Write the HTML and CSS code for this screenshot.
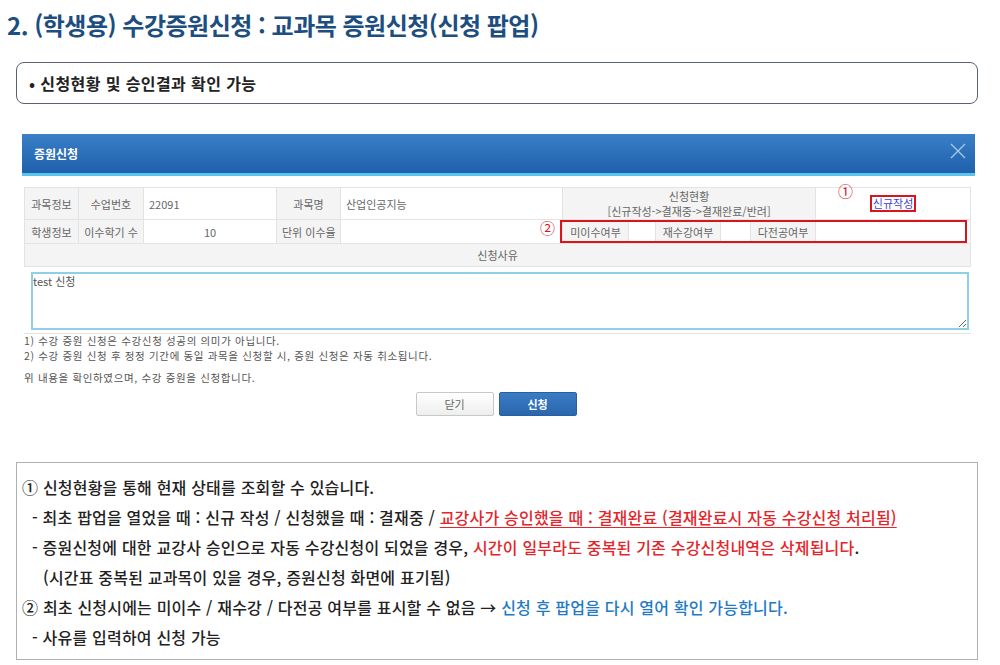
FILE: index.html
```html
<!DOCTYPE html>
<html lang="ko">
<head>
    <meta charset="UTF-8">
    <meta name="viewport" content="width=device-width, initial-scale=1.0">
    <title>수강증원신청</title>
    <link rel="stylesheet" href="styles.css">
</head>
<body>

    <h1 class="page-title">2. (학생용) 수강증원신청 : 교과목 증원신청(신청 팝업)</h1>

    <div class="summary">• 신청현황 및 승인결과 확인 가능</div>

    <div class="popup">
        <div class="popup-head">
            <span>증원신청</span>
            <svg class="close" width="16" height="16" viewBox="0 0 16 16">
                <path d="M1 1 L15 15 M15 1 L1 15" stroke="#a9c8ec" stroke-width="1.3" fill="none"/>
            </svg>
        </div>

        <div class="popup-body">
            <div class="table-wrap">
                <table class="info">
                    <colgroup>
                        <col style="width:54px">
                        <col style="width:65px">
                        <col style="width:133px">
                        <col style="width:64px">
                        <col style="width:222px">
                        <col style="width:66px">
                        <col style="width:27px">
                        <col style="width:65px">
                        <col style="width:30px">
                        <col style="width:65px">
                        <col style="width:155px">
                    </colgroup>
                    <tr class="row-1">
                        <th>과목정보</th>
                        <th>수업번호</th>
                        <td>22091</td>
                        <th>과목명</th>
                        <td>산업인공지능</td>
                        <th colspan="5" class="status">신청현황<br>[신규작성-&gt;결재중-&gt;결재완료/반려]</th>
                        <td class="center"><span class="new-mark">신규작성</span></td>
                    </tr>
                    <tr class="row-2">
                        <th>학생정보</th>
                        <th>이수학기 수</th>
                        <td class="center">10</td>
                        <th>단위 이수율</th>
                        <td></td>
                        <th>미이수여부</th>
                        <td></td>
                        <th>재수강여부</th>
                        <td></td>
                        <th>다전공여부</th>
                        <td></td>
                    </tr>
                    <tr class="row-3">
                        <th colspan="11">신청사유</th>
                    </tr>
                    <tr class="row-4">
                        <td colspan="11"><textarea class="reason">test 신청</textarea></td>
                    </tr>
                </table>

                <span class="num num-1">①</span>
                <span class="num num-2">②</span>
                <div class="mark-box"></div>
            </div>

            <div class="guide">
                <p>1) 수강 증원 신청은 수강신청 성공의 의미가 아닙니다.</p>
                <p>2) 수강 증원 신청 후 정정 기간에 동일 과목을 신청할 시, 증원 신청은 자동 취소됩니다.</p>
            </div>
            <div class="agree">위 내용을 확인하였으며, 수강 증원을 신청합니다.</div>

            <div class="buttons">
                <button class="btn-close">닫기</button>
                <button class="btn-apply">신청</button>
            </div>
        </div>
    </div>

    <div class="notes">
        <p>① 신청현황을 통해 현재 상태를 조회할 수 있습니다.</p>
        <p class="sub">- 최초 팝업을 열었을 때 : 신규 작성 / 신청했을 때 : 결재중 / <span class="red under">교강사가 승인했을 때 : 결재완료 (결재완료시 자동 수강신청 처리됨)</span></p>
        <p class="sub">- 증원신청에 대한 교강사 승인으로 자동 수강신청이 되었을 경우, <span class="red">시간이 일부라도 중복된 기존 수강신청내역은 삭제됩니다</span>.</p>
        <p class="sub2">(시간표 중복된 교과목이 있을 경우, 증원신청 화면에 표기됨)</p>
        <p>② 최초 신청시에는 미이수 / 재수강 / 다전공 여부를 표시할 수 없음 → <span class="blue">신청 후 팝업을 다시 열어 확인 가능합니다.</span></p>
        <p class="sub">- 사유를 입력하여 신청 가능</p>
    </div>

</body>
</html>
```

FILE: styles.css
```css
body {
    margin: 0;
    font-family: "Noto Sans CJK KR", "Noto Sans", sans-serif;
    background-color: white;
    color: #222;
}
.page-title {
    margin: 0;
    padding: 9px 0 0 7px;
    font-size: 24px;
    line-height: 32px;
    letter-spacing: -0.5px;
    font-weight: bold;
    color: #1d4e80;
}
.summary {
    margin: 21px 22px 0 16px;
    height: 40px;
    line-height: 40px;
    padding-left: 12px;
    border: 1px solid #5a6270;
    border-radius: 8px;
    font-size: 16px;
    letter-spacing: 0.4px;
    font-weight: bold;
    color: #222;
}
.popup {
    margin: 30px 25px 0 22px;
}
.popup-head {
    height: 39px;
    border-bottom: 3px solid #5cc3ec;
    background: linear-gradient(#3a7fc8, #1f60ab);
    display: flex;
    align-items: center;
    justify-content: space-between;
    padding: 0 9px 0 12px;
    color: white;
    font-size: 12px;
    font-weight: bold;
}
.close {
    margin-top: -6px;
}
.popup-body {
    padding: 11px 5px 0 2px;
}
.table-wrap {
    position: relative;
}
.info {
    width: 946px;
    table-layout: fixed;
    border-collapse: collapse;
    font-size: 11px;
    line-height: 14px;
    color: #666;
}
.info th, .info td {
    border: 1px solid #e3e3e3;
    padding: 0 5px;
    font-weight: normal;
    white-space: nowrap;
    overflow: visible;
}
.info th {
    background-color: #f4f4f4;
    text-align: center;
}
.info td {
    text-align: left;
}
.info td.center {
    text-align: center;
}
.row-1 th, .row-1 td {
    height: 31px;
}
.row-1 .status {
    line-height: 15px;
}
.row-2 th, .row-2 td {
    height: 23px;
}
.row-3 th {
    height: 22px;
}
.row-4 td {
    height: 58px;
    vertical-align: top;
    background-color: white;
    padding: 5px 5px 3px 5px;
    border-left-color: white;
    border-right-color: white;
}
.reason {
    display: block;
    box-sizing: border-box;
    width: 938px;
    height: 58px;
    margin: 0 0 0 1px;
    border: 2px solid #8fd0e6;
    padding: 0 0;
    font-family: "Noto Sans CJK KR", sans-serif;
    font-size: 11px;
    line-height: 14px;
    color: #555;
    resize: both;
}
.new-mark {
    display: inline-block;
    border: 2px solid #d9141b;
    padding: 0 1px;
    line-height: 13px;
    color: #3f3fd8;
}
.num {
    position: absolute;
    color: #d9141b;
    font-size: 15px;
    line-height: 15px;
}
.num-1 {
    left: 814px;
    top: -4px;
}
.num-2 {
    left: 516px;
    top: 33px;
}
.mark-box {
    position: absolute;
    left: 536px;
    top: 33px;
    width: 403px;
    height: 19px;
    border: 2px solid #d9141b;
}
.guide {
    margin-top: -1px;
    font-size: 10.5px;
    color: #555;
    letter-spacing: 0.65px;
}
.guide p {
    margin: 0;
    line-height: 15px;
}
.agree {
    margin-top: 7px;
    font-size: 10.5px;
    line-height: 15px;
    color: #555;
    letter-spacing: 0.65px;
}
.buttons {
    display: flex;
    justify-content: center;
    gap: 5px;
    margin-top: 7px;
    padding-right: 2px;
}
.buttons button {
    width: 78px;
    height: 24px;
    border-radius: 2px;
    font-family: "Noto Sans CJK KR", sans-serif;
    font-size: 11px;
    cursor: pointer;
}
.btn-close {
    background: linear-gradient(#ffffff, #eeeeee);
    border: 1px solid #c8c8c8;
    color: #666;
}
.btn-apply {
    background: linear-gradient(#3a7cc4, #2a66ae);
    border: 1px solid #2a5e9e;
    color: white;
    font-weight: bold;
}
.notes {
    margin: 46px 22px 0 16px;
    height: 187px;
    border: 1px solid #b0b0b0;
    padding: 9px 0 0 5px;
    font-size: 16px;
    letter-spacing: 0.2px;
    font-weight: 500;
}
.notes p {
    margin: 0;
    line-height: 30px;
    white-space: nowrap;
}
.notes .sub {
    padding-left: 10px;
}
.notes .sub2 {
    padding-left: 21px;
}
.red {
    color: #e3262b;
}
.under {
    text-decoration: underline;
    text-underline-offset: 3px;
}
.blue {
    color: #1f7bc4;
}
```
